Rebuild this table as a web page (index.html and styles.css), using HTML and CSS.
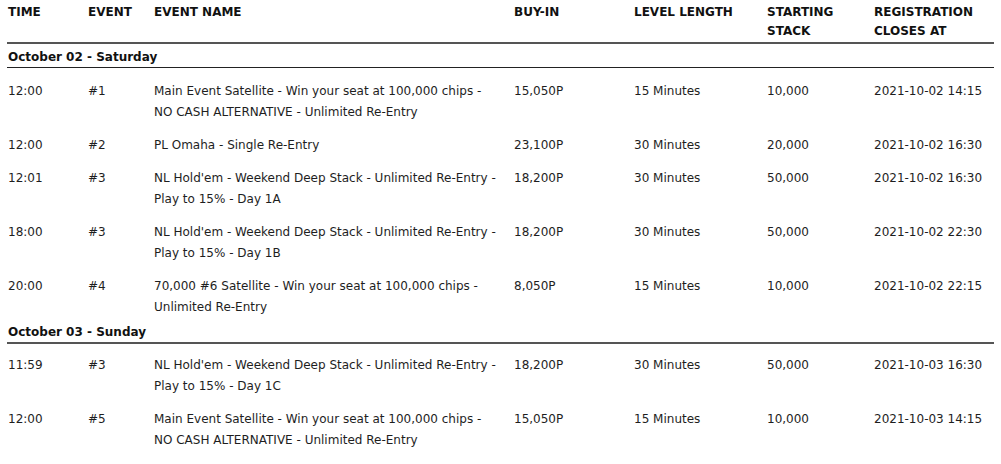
FILE: index.html
```html
<!DOCTYPE html>
<html>
<head>
<meta charset="utf-8">
<link rel="stylesheet" href="styles.css">
</head>
<body>
<div class="wrap">
<table class="schedule">
  <colgroup>
    <col class="c-time"><col class="c-event"><col class="c-name"><col class="c-buy"><col class="c-level"><col class="c-stack"><col class="c-reg">
  </colgroup>
  <thead>
    <tr>
      <th>TIME</th><th>EVENT</th><th>EVENT NAME</th><th>BUY-IN</th><th>LEVEL LENGTH</th><th>STARTING STACK</th><th>REGISTRATION CLOSES AT</th>
    </tr>
  </thead>
  <tbody>
    <tr class="day day-first"><td colspan="7">October 02 - Saturday</td></tr>
    <tr><td>12:00</td><td>#1</td><td>Main Event Satellite - Win your seat at 100,000 chips - NO CASH ALTERNATIVE - Unlimited Re-Entry</td><td>15,050P</td><td>15 Minutes</td><td>10,000</td><td>2021-10-02 14:15</td></tr>
    <tr><td>12:00</td><td>#2</td><td>PL Omaha - Single Re-Entry</td><td>23,100P</td><td>30 Minutes</td><td>20,000</td><td>2021-10-02 16:30</td></tr>
    <tr><td>12:01</td><td>#3</td><td>NL Hold'em - Weekend Deep Stack - Unlimited Re-Entry - Play to 15% - Day 1A</td><td>18,200P</td><td>30 Minutes</td><td>50,000</td><td>2021-10-02 16:30</td></tr>
    <tr><td>18:00</td><td>#3</td><td>NL Hold'em - Weekend Deep Stack - Unlimited Re-Entry - Play to 15% - Day 1B</td><td>18,200P</td><td>30 Minutes</td><td>50,000</td><td>2021-10-02 22:30</td></tr>
    <tr><td>20:00</td><td>#4</td><td>70,000 #6 Satellite - Win your seat at 100,000 chips - Unlimited Re-Entry</td><td>8,050P</td><td>15 Minutes</td><td>10,000</td><td>2021-10-02 22:15</td></tr>
    <tr class="day day-next"><td colspan="7">October 03 - Sunday</td></tr>
    <tr><td>11:59</td><td>#3</td><td>NL Hold'em - Weekend Deep Stack - Unlimited Re-Entry - Play to 15% - Day 1C</td><td>18,200P</td><td>30 Minutes</td><td>50,000</td><td>2021-10-03 16:30</td></tr>
    <tr><td>12:00</td><td>#5</td><td>Main Event Satellite - Win your seat at 100,000 chips - NO CASH ALTERNATIVE - Unlimited Re-Entry</td><td>15,050P</td><td>15 Minutes</td><td>10,000</td><td>2021-10-03 14:15</td></tr>
  </tbody>
</table>
</div>
</body>
</html>
```
FILE: styles.css
```css
html, body {
  margin: 0;
  padding: 0;
  background: #fff;
}
body {
  font-family: "DejaVu Sans", sans-serif;
  font-size: 12px;
  color: #1e1e1e;
}
.wrap {
  padding: 0 7px;
}
.schedule {
  width: 987px;
  border-collapse: collapse;
  table-layout: fixed;
}
.c-time { width: 80px; }
.c-event { width: 66px; }
.c-name { width: 360px; }
.c-buy { width: 120px; }
.c-level { width: 133px; }
.c-stack { width: 107px; }
.c-reg { width: 121px; }

.schedule th {
  text-align: left;
  vertical-align: top;
  font-weight: bold;
  line-height: 19px;
  padding: 3px 8px 1px 1px;
  color: #111;
  border-bottom: 2px solid #555;
}
.schedule td {
  vertical-align: top;
  line-height: 21px;
  padding: 12px 12px 0 1px;
}
.schedule td:last-child {
  padding-right: 3px;
}
.schedule .day td {
  font-weight: bold;
  color: #111;
  line-height: 20px;
  padding: 3px 0 0 1px;
}
.schedule .day-first td {
  border-bottom: 1px solid #222;
}
.schedule .day-next td {
  padding-top: 4px;
  border-bottom: 2px solid #555;
}
.schedule .day-first + tr td {
  padding-top: 13px;
}
.schedule .day-next + tr td {
  padding-top: 11px;
}
```
